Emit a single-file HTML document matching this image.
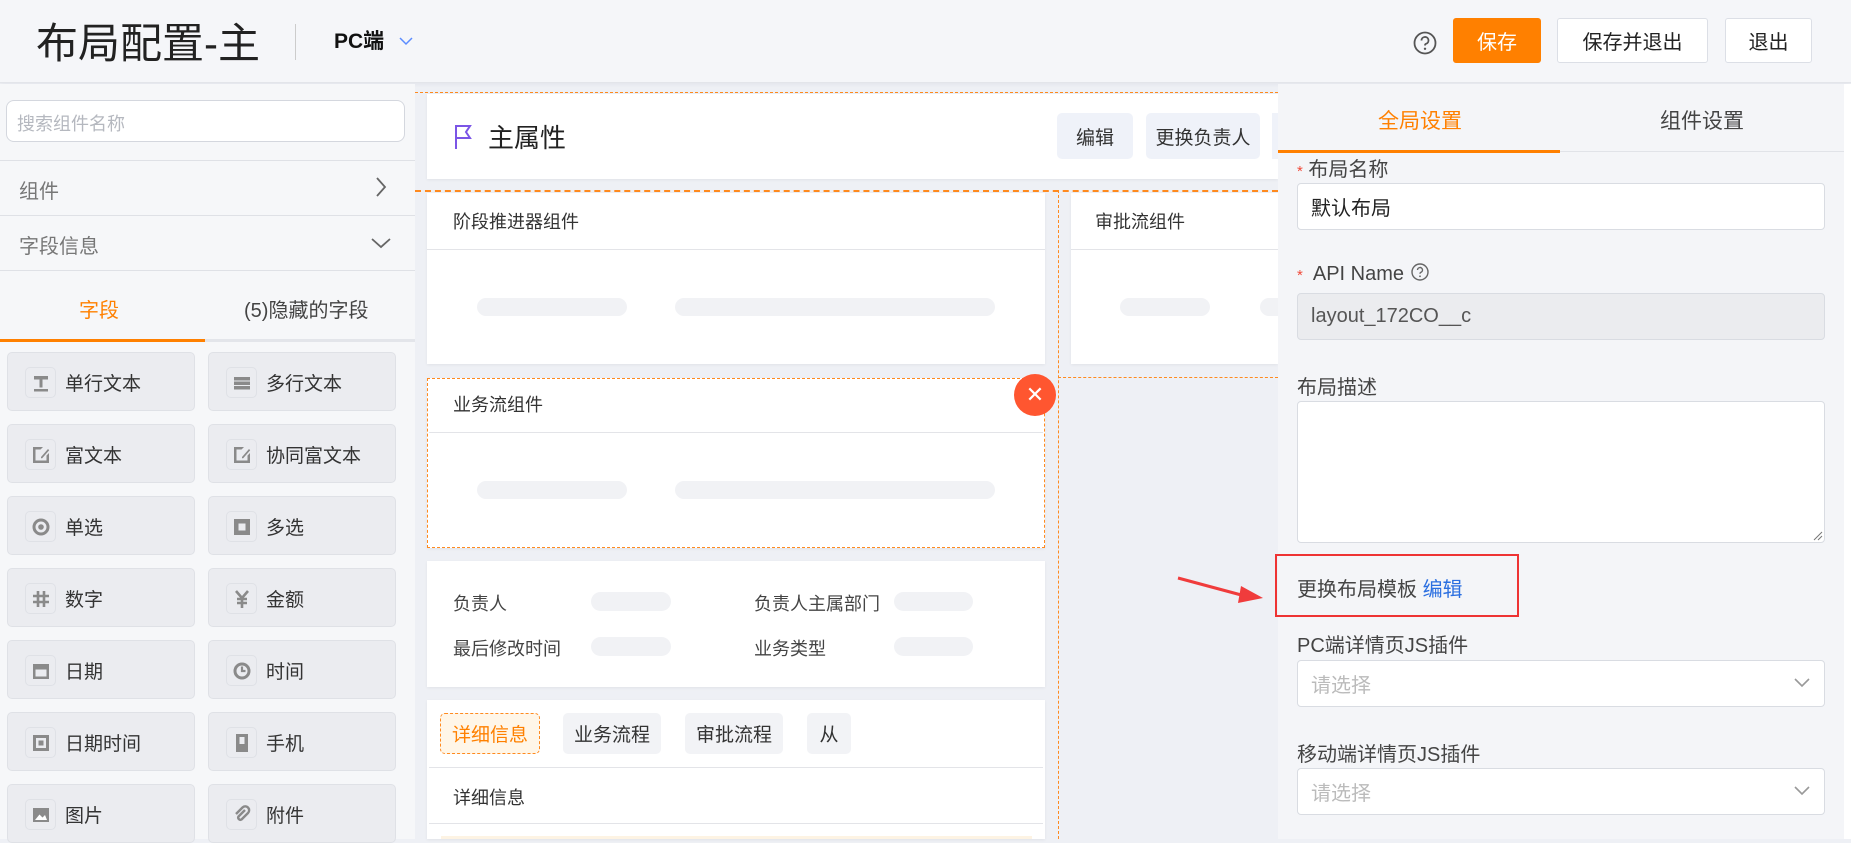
<!DOCTYPE html>
<html><head><meta charset="utf-8"><style>
*{box-sizing:border-box;margin:0;padding:0}
body{width:1851px;height:839px;overflow:hidden;background:#eef0f5;font-family:"Liberation Sans","Noto Sans CJK SC",sans-serif;color:#333;position:relative}
.a{position:absolute}
.hdr{left:0;top:0;width:1851px;height:83px;background:#f5f6f9;border-bottom:1px solid #e3e5ea;box-shadow:0 2px 4px rgba(0,0,0,.04)}
.btn{position:absolute;top:18px;height:45px;border:1px solid #dcdfe6;border-radius:3px;background:#fff;font-size:20px;display:flex;align-items:center;justify-content:center;color:#222}
.left{left:0;top:84px;width:415px;height:755px;background:#f6f7f9}
.fb{position:absolute;width:188px;height:59px;background:#ebecf0;border:1px solid #dfe1e6;border-radius:5px;font-size:19px;color:#333}
.fb .ic{position:absolute;left:17px;top:14px;width:31px;height:31px;border:1px solid #dfe1e6;border-radius:5px;display:flex;align-items:center;justify-content:center}
.fb span{position:absolute;left:57px;top:16px}
.card{position:absolute;background:#fff;box-shadow:0 1px 3px rgba(0,0,0,.06)}
.sk{position:absolute;background:#f1f2f5;border-radius:10px}
.t18{font-size:18px;color:#333}
.rp{left:1278px;top:84px;width:566px;height:755px;background:#f4f5f8}
.lbl{position:absolute;left:1297px;font-size:20px;color:#444}
.inp{position:absolute;left:1297px;width:528px;background:#fff;border:1px solid #d9dce2;border-radius:4px;font-size:20px;padding-left:13px;display:flex;align-items:center}
.tab{position:absolute;top:713px;height:41px;background:#f2f3f6;border-radius:5px;font-size:19px;display:flex;align-items:center;justify-content:center;color:#333}
svg.i path,svg.i rect{fill:#8a8a8a}
</style></head><body>
<div class="a hdr"></div>
<div class="a" style="left:36px;top:10px;font-size:42px;color:#222">布局配置-主</div>
<div class="a" style="left:295px;top:24px;width:1px;height:36px;background:#ccc"></div>
<div class="a" style="left:334px;top:25px;font-size:21px;font-weight:bold;color:#111">PC端</div>
<svg class="a" style="left:398px;top:35px" width="16" height="12"><path d="M2 3l6 6 6-6" stroke="#5b8cff" stroke-width="1.5" fill="none"/></svg>
<svg class="a" style="left:1412px;top:30px" width="26" height="26"><circle cx="13" cy="13" r="10.5" stroke="#555" stroke-width="1.8" fill="none"/><path d="M9.5 10.5a3.5 3.5 0 1 1 4.5 3.3c-.8.3-1 .8-1 1.7" stroke="#555" stroke-width="1.8" fill="none"/><circle cx="13" cy="18.8" r="1.2" fill="#555"/></svg>
<div class="btn" style="left:1453px;width:88px;background:#ff8000;border-color:#ff8000;color:#fff">保存</div>
<div class="btn" style="left:1557px;width:151px">保存并退出</div>
<div class="btn" style="left:1725px;width:87px">退出</div>
<div class="a" style="left:1844px;top:84px;width:7px;height:755px;background:#fff"></div>

<div class="a left"></div>
<div class="a" style="left:6px;top:100px;width:399px;height:42px;background:#fff;border:1px solid #d4d7de;border-radius:8px;font-size:18px;color:#b5b8bf;padding:9px 10px">搜索组件名称</div>
<div class="a" style="left:0;top:160px;width:415px;height:1px;background:#dfe1e6"></div>
<div class="a" style="left:19px;top:175px;font-size:20px;color:#777">组件</div>
<svg class="a" style="left:374px;top:176px" width="14" height="22"><path d="M3 2l8 9-8 9" stroke="#666" stroke-width="1.8" fill="none"/></svg>
<div class="a" style="left:0;top:215px;width:415px;height:1px;background:#dfe1e6"></div>
<div class="a" style="left:19px;top:230px;font-size:20px;color:#777">字段信息</div>
<svg class="a" style="left:370px;top:236px" width="22" height="14"><path d="M2 3l9 8 9-8" stroke="#666" stroke-width="1.8" fill="none"/></svg>
<div class="a" style="left:0;top:270px;width:415px;height:1px;background:#dfe1e6"></div>
<div class="a" style="left:79px;top:294px;font-size:20px;color:#ff8000">字段</div>
<div class="a" style="left:244px;top:294px;font-size:20px;color:#444">(5)隐藏的字段</div>
<div class="a" style="left:0;top:339px;width:415px;height:3px;background:#e3e5ea"></div>
<div class="a" style="left:0;top:339px;width:205px;height:3px;background:#ff8000"></div>

<div class="fb" style="left:7px;top:352px"><div class="ic"><svg class="i" width="20" height="20"><path d="M3 3h14v3.5H11.5v8h-3v-8H3z M3 16h14v2.5H3z"/></svg></div><span>单行文本</span></div>
<div class="fb" style="left:208px;top:352px"><div class="ic"><svg class="i" width="20" height="20"><path d="M2 4h16v3.5H2zM2 8.5h16V12H2zM2 13h16v3.5H2z"/></svg></div><span>多行文本</span></div>
<div class="fb" style="left:7px;top:424px"><div class="ic"><svg class="i" width="20" height="20"><path d="M2 2h10l-2.5 2.5H4.5v11h11V10.5L18 8v10H2z M10 12l7-8 1.2 1.2-7 8H10z"/></svg></div><span>富文本</span></div>
<div class="fb" style="left:208px;top:424px"><div class="ic"><svg class="i" width="20" height="20"><path d="M2 2h10l-2.5 2.5H4.5v11h11V10.5L18 8v10H2z M10 12l7-8 1.2 1.2-7 8H10z"/></svg></div><span>协同富文本</span></div>
<div class="fb" style="left:7px;top:496px"><div class="ic"><svg width="20" height="20"><circle cx="10" cy="10" r="7" stroke="#8a8a8a" stroke-width="3" fill="none"/><circle cx="10" cy="10" r="2.8" fill="#8a8a8a"/></svg></div><span>单选</span></div>
<div class="fb" style="left:208px;top:496px"><div class="ic"><svg class="i" width="20" height="20"><path d="M2 2h16v16H2z M6.5 6.5v7h7v-7z" fill-rule="evenodd"/></svg></div><span>多选</span></div>
<div class="fb" style="left:7px;top:568px"><div class="ic"><svg width="20" height="20"><path d="M7 2v16M13 2v16M2 7h16M2 13h16" stroke="#8a8a8a" stroke-width="2.6"/></svg></div><span>数字</span></div>
<div class="fb" style="left:208px;top:568px"><div class="ic"><svg width="20" height="20"><path d="M4 2l6 7 6-7M10 9v10M5 10h10M5 14h10" stroke="#8a8a8a" stroke-width="2.6" fill="none"/></svg></div><span>金额</span></div>
<div class="fb" style="left:7px;top:640px"><div class="ic"><svg class="i" width="20" height="20"><path d="M2 3h16v15H2z M4.5 8.5v7h11v-7z" fill-rule="evenodd"/></svg></div><span>日期</span></div>
<div class="fb" style="left:208px;top:640px"><div class="ic"><svg width="20" height="20"><circle cx="10" cy="10" r="7" stroke="#8a8a8a" stroke-width="3" fill="none"/><path d="M10 5.5v4.5h3.5" stroke="#8a8a8a" stroke-width="2.2" fill="none"/></svg></div><span>时间</span></div>
<div class="fb" style="left:7px;top:712px"><div class="ic"><svg class="i" width="20" height="20"><path d="M2 2h16v16H2z M5 5v10h10V5z" fill-rule="evenodd"/><rect x="7.5" y="7.5" width="5" height="5"/></svg></div><span>日期时间</span></div>
<div class="fb" style="left:208px;top:712px"><div class="ic"><svg class="i" width="20" height="20"><path d="M4 1h12v18H4z M7.5 4v7h5V4z" fill-rule="evenodd"/></svg></div><span>手机</span></div>
<div class="fb" style="left:7px;top:784px"><div class="ic"><svg width="20" height="20"><path d="M2 3h16v14H2z" fill="#8a8a8a"/><path d="M4 15l4.5-5.5 3 3 2.5-2.5 2 5z" fill="#fff"/></svg></div><span>图片</span></div>
<div class="fb" style="left:208px;top:784px"><div class="ic"><svg width="20" height="20"><path d="M13 5l-6.5 6.5a2.2 2.2 0 0 0 3 3L16 8a3.8 3.8 0 0 0-5.5-5.5L4 9" stroke="#8a8a8a" stroke-width="2.4" fill="none"/></svg></div><span>附件</span></div>

<!-- canvas -->
<div class="a" style="left:415px;top:92px;width:863px;height:0;border-top:1.5px dashed #ff8a1f"></div>
<div class="card" style="left:427px;top:94px;width:851px;height:85px"></div>
<svg class="a" style="left:453px;top:123px" width="20" height="28"><path d="M3 26V3h14l-4 6 4 6H3" stroke="#7b55e6" stroke-width="2" fill="none"/></svg>
<div class="a" style="left:488px;top:118px;font-size:26px;color:#222">主属性</div>
<div class="a tab" style="left:1057px;top:113px;width:76px;height:46px;background:#eff2f9">编辑</div>
<div class="a tab" style="left:1146px;top:113px;width:114px;height:46px;background:#eff2f9">更换负责人</div>
<div class="a" style="left:1272px;top:113px;width:6px;height:46px;background:#eff2f9"></div>

<div class="a" style="left:415px;top:190px;width:863px;height:0;border-top:2px dashed #ff8a1f"></div>
<div class="a" style="left:1058px;top:190px;width:0;height:649px;border-left:1.5px dashed #ff8a1f"></div>
<div class="a" style="left:1058px;top:377px;width:220px;height:0;border-top:1.5px dashed #ff8a1f"></div>
<div class="card" style="left:427px;top:193px;width:618px;height:171px"></div>
<div class="a t18" style="left:453px;top:208px">阶段推进器组件</div>
<div class="a" style="left:427px;top:249px;width:618px;height:1px;background:#e3e4e8"></div>
<div class="sk" style="left:477px;top:298px;width:150px;height:18px"></div>
<div class="sk" style="left:675px;top:298px;width:320px;height:18px"></div>
<div class="card" style="left:1071px;top:193px;width:207px;height:171px"></div>
<div class="a t18" style="left:1095px;top:208px">审批流组件</div>
<div class="a" style="left:1071px;top:249px;width:207px;height:1px;background:#e3e4e8"></div>
<div class="sk" style="left:1120px;top:298px;width:90px;height:18px"></div>
<div class="sk" style="left:1260px;top:298px;width:18px;height:18px;border-radius:10px 0 0 10px"></div>

<div class="card" style="left:427px;top:378px;width:618px;height:170px;border:1.5px dashed #ff8a1f"></div>
<div class="a t18" style="left:453px;top:391px">业务流组件</div>
<div class="a" style="left:429px;top:432px;width:614px;height:1px;background:#e3e4e8"></div>
<div class="sk" style="left:477px;top:481px;width:150px;height:18px"></div>
<div class="sk" style="left:675px;top:481px;width:320px;height:18px"></div>
<div class="a" style="left:1014px;top:374px;width:42px;height:42px;border-radius:50%;background:#ff5630;color:#fff;font-size:22px;display:flex;align-items:center;justify-content:center">✕</div>

<div class="card" style="left:427px;top:561px;width:618px;height:126px"></div>
<div class="a t18" style="left:453px;top:590px;color:#444">负责人</div>
<div class="sk" style="left:591px;top:592px;width:80px;height:19px"></div>
<div class="a t18" style="left:754px;top:590px;color:#444">负责人主属部门</div>
<div class="sk" style="left:894px;top:592px;width:79px;height:19px"></div>
<div class="a t18" style="left:453px;top:635px;color:#444">最后修改时间</div>
<div class="sk" style="left:591px;top:637px;width:80px;height:19px"></div>
<div class="a t18" style="left:754px;top:635px;color:#444">业务类型</div>
<div class="sk" style="left:894px;top:637px;width:79px;height:19px"></div>

<div class="card" style="left:427px;top:700px;width:618px;height:139px"></div>
<div class="tab" style="left:440px;width:100px;background:#fff6e8;border:1.5px dashed #ff8a1f;color:#ff8000">详细信息</div>
<div class="tab" style="left:563px;width:98px">业务流程</div>
<div class="tab" style="left:685px;width:98px">审批流程</div>
<div class="tab" style="left:807px;width:44px">从</div>
<div class="a" style="left:429px;top:767px;width:614px;height:1px;background:#e3e4e8"></div>
<div class="a t18" style="left:453px;top:784px">详细信息</div>
<div class="a" style="left:429px;top:823px;width:614px;height:1px;background:#e3e4e8"></div>
<div class="a" style="left:441px;top:836px;width:591px;height:3px;background:#fdf3e3"></div>

<!-- arrow -->
<svg class="a" style="left:1175px;top:570px" width="95" height="35"><path d="M3 8L70 26" stroke="#f03c3c" stroke-width="3"/><path d="M66 16L88 28 63 33z" fill="#f03c3c"/></svg>

<!-- right panel -->
<div class="a rp"></div>
<div class="a" style="left:1278px;top:151px;width:566px;height:1px;background:#e1e3e8"></div>
<div class="a" style="left:1278px;top:150px;width:282px;height:3px;background:#ff8000"></div>
<div class="a" style="left:1378px;top:105px;font-size:21px;color:#ff8000">全局设置</div>
<div class="a" style="left:1660px;top:105px;font-size:21px;color:#444">组件设置</div>
<div class="lbl" style="top:153px"><span style="color:#f04a3a;font-size:15px">*</span> 布局名称</div>
<div class="inp" style="top:183px;height:47px;color:#222">默认布局</div>
<div class="lbl" style="top:262px"><span style="color:#f04a3a;font-size:15px">*</span>&nbsp; API Name <svg width="20" height="20" style="vertical-align:-2px"><circle cx="10" cy="10" r="8" stroke="#666" stroke-width="1.4" fill="none"/><path d="M7.5 8a2.5 2.5 0 1 1 3.2 2.4c-.6.2-.7.6-.7 1.3" stroke="#666" stroke-width="1.4" fill="none"/><circle cx="10" cy="14.3" r=".9" fill="#666"/></svg></div>
<div class="inp" style="top:293px;height:47px;background:#ebecef;color:#555">layout_172CO__c</div>
<div class="lbl" style="top:371px">布局描述</div>
<div class="inp" style="top:401px;height:142px"></div>
<svg class="a" style="left:1813px;top:531px" width="10" height="10"><path d="M9 1L1 9M9 5L5 9" stroke="#777" stroke-width="1"/></svg>
<div class="a" style="left:1275px;top:554px;width:244px;height:63px;border:2.5px solid #ee3333"></div>
<div class="lbl" style="top:573px">更换布局模板 <span style="color:#2b6fe0">编辑</span></div>
<div class="lbl" style="top:629px">PC端详情页JS插件</div>
<div class="inp" style="top:660px;height:47px;color:#bbb">请选择</div>
<svg class="a" style="left:1793px;top:677px" width="18" height="12"><path d="M2 2l7 7 7-7" stroke="#999" stroke-width="1.6" fill="none"/></svg>
<div class="lbl" style="top:738px">移动端详情页JS插件</div>
<div class="inp" style="top:768px;height:47px;color:#bbb">请选择</div>
<svg class="a" style="left:1793px;top:785px" width="18" height="12"><path d="M2 2l7 7 7-7" stroke="#999" stroke-width="1.6" fill="none"/></svg>
</body></html>
